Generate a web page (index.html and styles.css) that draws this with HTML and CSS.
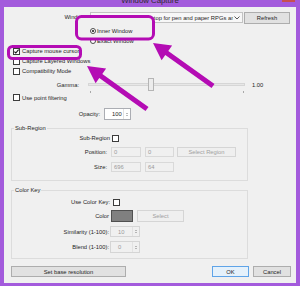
FILE: index.html
```html
<!DOCTYPE html>
<html>
    <head>
        <meta charset="utf-8">
        <title>Window Capture</title>
        <link rel="stylesheet" href="styles.css">
    </head>
    <body>
        <div class="window">
            <div class="titlebar">
                <span class="title">Window Capture</span>
                <span class="close"></span>
            </div>
            <div class="client">
                <div class="row r-window">
                    <span class="lbl w-window">Window</span>
                    <div class="combo">
                        <span class="combo-text">Fantasy Grounds - Desktop for pen and paper RPGs and</span>
                        <svg class="caret" width="6" height="4" viewBox="0 0 6 4"><polyline points="0.5,0.5 3,3 5.5,0.5" fill="none" stroke="#444" stroke-width="0.9"/></svg>
                    </div>
                    <span class="btn refresh">Refresh</span>
                </div>
                <div class="row r-radio first on-top"><span class="radio on"></span>Inner Window</div>
                <div class="row r-radio"><span class="radio"></span>Exact Window</div>

                <div class="row r-check"><span class="check on"><svg width="5" height="5" viewBox="0 0 5 5"><polyline points="0.4,2.6 1.8,4 4.6,0.6" fill="none" stroke="#111" stroke-width="1.1"/></svg></span>Capture mouse cursor</div>
                <div class="row r-check"><span class="check"></span>Capture Layered Windows</div>
                <div class="row r-check"><span class="check"></span>Compatibility Mode</div>

                <div class="row r-gamma">
                    <span class="lbl w-gamma">Gamma:</span>
                    <div class="slider">
                        <div class="track"></div>
                        <div class="thumb"></div>
                    </div>
                    <span class="gamma-val">1.00</span>
                </div>
                <div class="row ticks"><span class="tick"></span><span class="tick"></span></div>
                <div class="row r-check r-point"><span class="check"></span>Use point filtering</div>

                <div class="row r-opacity">
                    <span class="lbl w-opacity">Opacity:</span>
                    <div class="spin enabled">
                        <span class="spin-val">100</span>
                        <span class="spin-btns"><i class="up"></i><i class="down"></i></span>
                    </div>
                </div>

                <div class="group g-sub">
                    <span class="legend">Sub-Region</span>
                    <div class="row r-subcheck">
                        <span class="lbl w-grp-check">Sub-Region</span>
                        <span class="check"></span>
                    </div>
                    <div class="row r-pos">
                        <span class="lbl w-grp">Position:</span>
                        <span class="field f1">0</span>
                        <span class="field f2">0</span>
                        <span class="btn off sel-region">Select Region</span>
                    </div>
                    <div class="row r-size">
                        <span class="lbl w-grp">Size:</span>
                        <span class="field f1">696</span>
                        <span class="field f2">64</span>
                    </div>
                </div>

                <div class="group g-key">
                    <span class="legend">Color Key</span>
                    <div class="row r-usekey">
                        <span class="lbl w-grp-check">Use Color Key:</span>
                        <span class="check"></span>
                    </div>
                    <div class="row r-color">
                        <span class="lbl w-grp2">Color</span>
                        <span class="swatch"></span>
                        <span class="btn off sel-color">Select</span>
                    </div>
                    <div class="row r-sim">
                        <span class="lbl w-grp2">Similarity (1-100):</span>
                        <div class="spin">
                            <span class="spin-val">10</span>
                            <span class="spin-btns"><i class="up"></i><i class="down"></i></span>
                        </div>
                    </div>
                    <div class="row r-blend">
                        <span class="lbl w-grp2">Blend (1-100):</span>
                        <div class="spin">
                            <span class="spin-val">0</span>
                            <span class="spin-btns"><i class="up"></i><i class="down"></i></span>
                        </div>
                    </div>
                </div>

                <div class="row r-bottom">
                    <span class="btn base-res">Set base resolution</span>
                    <span class="btn ok">OK</span>
                    <span class="btn cancel">Cancel</span>
                </div>
            </div>

            <!-- annotation layer drawn over the dialog -->
            <svg class="overlay" width="300" height="286" viewBox="0 0 300 286">
                <rect x="76.5" y="16.5" width="77" height="22.5" rx="5" fill="#f0f0f0" stroke="#b40cb4" stroke-width="3"/>
                <rect x="8.5" y="46.5" width="72" height="12" rx="4" fill="none" stroke="#b40cb4" stroke-width="3"/>
                <polygon fill="#b40cb4" points="153,43 172.1,45.6 168.3,50.9 214.5,84 211.5,88 165.3,54.9 161.6,60.2"/>
                <polygon fill="#b40cb4" points="87,66 106.1,68.6 102.3,73.9 148.5,107 145.5,111 99.3,77.9 95.6,83.2"/>
            </svg>
        </div>
    </body>
</html>
```

FILE: styles.css
```css
body{margin:0; background:#fff; font-family:"Liberation Sans", Arial, sans-serif; font-size:5.8px; color:#1e1e1e}
.window{position:relative; width:300px; height:286px; box-sizing:border-box; padding:0 4px 3px 4px; background:#a35bdc; display:flex; flex-direction:column}
.titlebar{height:7px; flex-shrink:0; display:flex; overflow:hidden; padding-left:14px}
.title{flex:1; text-align:center; font-size:7.8px; line-height:2px; color:#2a2a2a}
.close{width:13px; height:2px; margin-right:1px; background:#c75050}
.client{flex:1; background:#f0f0f0; display:flex; flex-direction:column}

.row{display:flex; align-items:center; height:10px; flex-shrink:0; white-space:nowrap}
.lbl{text-align:right; flex-shrink:0}

.r-window{margin-top:5px; height:12px; align-items:flex-start}
.w-window{width:81px; line-height:11px}
.combo{width:153px; height:11px; margin-left:5px; box-sizing:border-box; border:1px solid #c3c3c3; background:#f7f7f7; display:flex; align-items:center; overflow:hidden}
.combo-text{flex:1; min-width:0; overflow:hidden; padding-left:0}
.caret{flex-shrink:0; margin:0 2px 0 1px}
.btn{display:flex; align-items:center; justify-content:center; box-sizing:border-box; border:1px solid #adadad; background:#e1e1e1; flex-shrink:0}
.refresh{width:46px; height:12px; margin-left:1px}

.r-radio{padding-left:86px}
.r-radio.first{margin-top:2px}
.on-top{position:relative; z-index:2}
.radio{width:6px; height:6px; box-sizing:border-box; border:1px solid #4a4a4a; border-radius:50%; background:#fff; margin-right:1px; display:flex; align-items:center; justify-content:center}
.radio.on::after{content:""; width:2px; height:2px; border-radius:50%; background:#111}

.r-check{padding-left:9px}
.check{width:7px; height:7px; box-sizing:border-box; border:1px solid #3c3c3c; background:#fff; margin-right:2px; display:flex; align-items:center; justify-content:center; flex-shrink:0}

.r-gamma{margin-top:2px; height:13px}
.w-gamma{width:75px}
.slider{position:relative; width:157px; height:13px; margin-left:9px}
.track{height:3px; margin-top:5px; box-sizing:border-box; border:1px solid #d6d6d6; background:#e7e7e7}
.thumb{position:absolute; left:60px; top:0; width:6px; height:13px; box-sizing:border-box; border:1px solid #b5b5b5; background:#ececec}
.gamma-val{margin-left:7px}
.ticks{height:2px; padding-left:86px; width:154px; justify-content:space-between; align-items:stretch}
.tick{width:1px; background:#a8a8a8}
.r-point{height:9px}

.r-opacity{margin-top:6px; height:12px}
.w-opacity{width:96px}
.spin{display:flex; align-items:center; box-sizing:border-box; width:30px; height:100%; border:1px solid #d5d5d5; background:#f0f0f0; color:#9a9a9a; margin-left:1px}
.spin.enabled{width:27px; margin-left:4px; border-color:#abadb3; background:#fff; color:#1e1e1e}
.spin-val{flex:1; padding-left:7px}
.spin-btns{width:5px; height:100%; display:flex; flex-direction:column; justify-content:center; gap:1px; border-left:1px solid #e2e2e2; margin-right:1px}
.spin-btns i{display:block; margin:0 auto; width:0; height:0; border-left:1.5px solid transparent; border-right:1.5px solid transparent}
.spin-btns .up{border-bottom:1.5px solid #7a7a7a}
.spin-btns .down{border-top:1.5px solid #7a7a7a}

.group{margin-left:7px; width:237px; box-sizing:border-box; border:1px solid #dcdcdc; display:flex; flex-direction:column}
.g-sub{margin-top:8px; padding-bottom:8px}
.g-key{margin-top:9px; padding-bottom:5px}
.legend{align-self:flex-start; margin:-4px 0 0 2px; height:7px; line-height:7px; padding:0 1px; background:#f0f0f0}
.w-grp-check{width:98px}
.w-grp{width:95px}
.w-grp2{width:97px}

.r-subcheck{margin-top:1px}
.r-subcheck .check{margin-left:2px}
.r-pos{margin-top:4px}
.r-size{margin-top:5px}
.field{box-sizing:border-box; height:10px; display:flex; align-items:center; padding-left:2px; border:1px solid #d9d9d9; color:#9a9a9a}
.f1{width:30px; margin-left:4px}
.f2{width:29px; margin-left:4px}
.btn.off{background:#efefef; border-color:#d5d5d5; color:#a0a0a0}
.sel-region{width:59px; height:10px; margin-left:3px}

.r-usekey{margin-top:3px}
.r-usekey .check{margin-left:3px}
.r-color{margin-top:3px; height:12px}
.swatch{width:22px; height:12px; margin-left:2px; box-sizing:border-box; border:1px solid #505050; background:#808080}
.sel-color{width:47px; height:12px; margin-left:4px}
.r-sim{margin-top:4px; height:11px}
.r-blend{margin-top:4px; height:12px}

.r-bottom{margin-top:7px; height:11px; padding:0 5px 0 7px}
.base-res{width:115px; height:11px}
.ok{width:37px; height:11px; margin-left:auto; border-color:#5fa4e8; background:#e5f1fb}
.cancel{width:38px; height:11px; margin-left:4px}

.overlay{position:absolute; left:0; top:0; z-index:1; pointer-events:none}
```
